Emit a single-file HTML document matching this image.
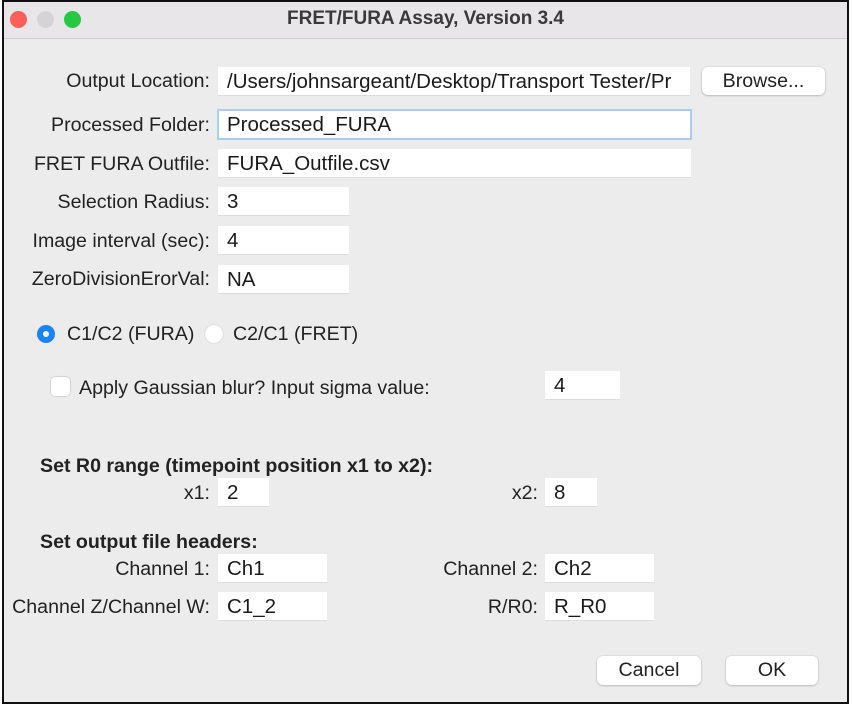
<!DOCTYPE html>
<html><head><meta charset="utf-8"><style>
*{box-sizing:border-box;margin:0;padding:0}
body{width:852px;height:708px;background:#fff;position:relative;overflow:hidden;font-family:"Liberation Sans",sans-serif;font-size:19.6px;color:#222}
#win{position:absolute;left:2px;top:0;width:847px;height:704px;border:2px solid #111;background:#ececec}
#tb{position:absolute;left:0;top:0;right:0;height:37px;background:#e8e6e8;border-bottom:1px solid #d0d0d0}
.dot{position:absolute;top:9px;width:17px;height:17px;border-radius:50%}
#title{position:absolute;left:0;right:0;top:6px;text-align:center;font-weight:bold;font-size:19px;color:#3a3a3a}
.l{position:absolute;text-align:right;white-space:nowrap;line-height:22px}
.f{position:absolute;background:#fff;border-bottom:1px solid #ddd;padding-left:9px;line-height:29px;white-space:nowrap;overflow:hidden;color:#1a1a1a;font-size:20.5px}
.b{position:absolute;background:#fff;border-radius:6px;box-shadow:0 0.5px 2px rgba(0,0,0,.3);text-align:center;line-height:28px}
.h{position:absolute;font-weight:bold;white-space:nowrap}
</style></head><body>
<div id="win">
<div id="tb">
<div class="dot" style="left:6px;background:#fe5f57"></div>
<div class="dot" style="left:33px;background:#d5d4d5"></div>
<div class="dot" style="left:60px;background:#28c840"></div>
<div id="title">FRET/FURA Assay, Version 3.4</div>
</div>
</div>
<div class="l" style="right:642px;top:70px">Output Location:</div>
<div class="f" style="left:218px;top:67px;width:472px;height:29px">/Users/johnsargeant/Desktop/Transport Tester/Pr</div>
<div class="b" style="left:702px;top:67px;width:123px;height:28px">Browse...</div>
<div class="l" style="right:642px;top:114px">Processed Folder:</div>
<div class="f" style="left:217px;top:109px;width:475px;height:31px;border:2px solid #a9cdf3;padding-left:8px;line-height:27px">Processed_FURA</div>
<div class="l" style="right:642px;top:153px">FRET FURA Outfile:</div>
<div class="f" style="left:218px;top:149px;width:473px;height:29px">FURA_Outfile.csv</div>
<div class="l" style="right:642px;top:191px">Selection Radius:</div>
<div class="f" style="left:218px;top:187px;width:131px;height:29px">3</div>
<div class="l" style="right:642px;top:230px">Image interval (sec):</div>
<div class="f" style="left:218px;top:226px;width:131px;height:29px">4</div>
<div class="l" style="right:642px;top:268px">ZeroDivisionErorVal:</div>
<div class="f" style="left:218px;top:265px;width:131px;height:29px">NA</div>
<div style="position:absolute;left:37px;top:325px;width:18px;height:18px;border-radius:50%;background:#1a82fb"><div style="position:absolute;left:6px;top:6px;width:6px;height:6px;border-radius:50%;background:#fff"></div></div>
<div class="l" style="left:67px;top:323px">C1/C2 (FURA)</div>
<div style="position:absolute;left:205px;top:325px;width:18px;height:18px;border-radius:50%;background:#fff;box-shadow:0 0 1px rgba(0,0,0,.35)"></div>
<div class="l" style="left:233px;top:323px">C2/C1 (FRET)</div>
<div style="position:absolute;left:51px;top:377px;width:19px;height:19px;border-radius:4px;background:#fff;box-shadow:0 0 1.5px rgba(0,0,0,.4)"></div>
<div class="l" style="left:79px;top:377px">Apply Gaussian blur? Input sigma value:</div>
<div class="f" style="left:545px;top:371px;width:75px;height:29px">4</div>
<div class="h" style="left:40px;top:455px">Set R0 range (timepoint position x1 to x2):</div>
<div class="l" style="right:642px;top:482px">x1:</div>
<div class="f" style="left:218px;top:478px;width:51px;height:29px">2</div>
<div class="l" style="right:314px;top:482px">x2:</div>
<div class="f" style="left:545px;top:478px;width:52px;height:29px">8</div>
<div class="h" style="left:40px;top:531px">Set output file headers:</div>
<div class="l" style="right:642px;top:558px">Channel 1:</div>
<div class="f" style="left:218px;top:554px;width:109px;height:29px">Ch1</div>
<div class="l" style="right:314px;top:558px">Channel 2:</div>
<div class="f" style="left:545px;top:554px;width:109px;height:29px">Ch2</div>
<div class="l" style="right:642px;top:596px">Channel Z/Channel W:</div>
<div class="f" style="left:218px;top:592px;width:109px;height:29px">C1_2</div>
<div class="l" style="right:314px;top:596px">R/R0:</div>
<div class="f" style="left:545px;top:592px;width:109px;height:29px">R_R0</div>
<div class="b" style="left:597px;top:656px;width:104px;height:29px">Cancel</div>
<div class="b" style="left:726px;top:656px;width:92px;height:29px">OK</div>
</body></html>
